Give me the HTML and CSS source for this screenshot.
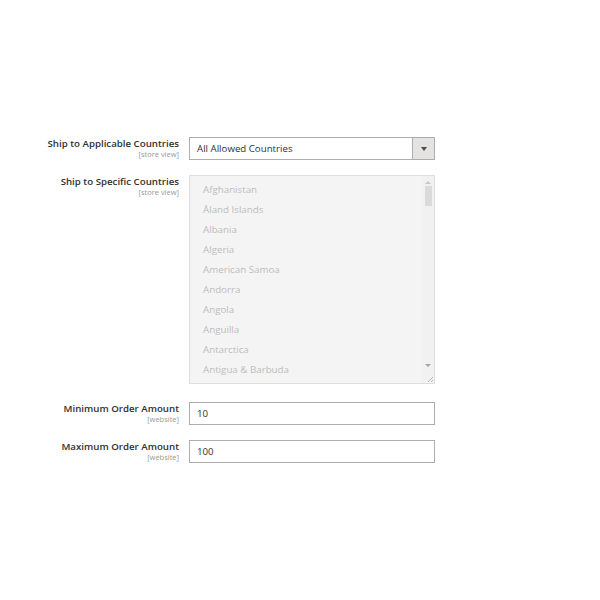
FILE: index.html
```html
<!DOCTYPE html>
<html>
<head>
<meta charset="utf-8">
<link rel="stylesheet" href="styles.css">
</head>
<body>
<div class="form">
  <div class="row row-select">
    <div class="label">
      <span class="title">Ship to Applicable Countries</span>
      <span class="scope">[store view]</span>
    </div>
    <div class="select">
      <span class="select-value">All Allowed Countries</span>
      <span class="select-arrow"><span class="tri"></span></span>
    </div>
  </div>
  <div class="row row-multi">
    <div class="label">
      <span class="title">Ship to Specific Countries</span>
      <span class="scope">[store view]</span>
    </div>
    <div class="multi">
      <ul class="options">
        <li>Afghanistan</li>
        <li>Åland Islands</li>
        <li>Albania</li>
        <li>Algeria</li>
        <li>American Samoa</li>
        <li>Andorra</li>
        <li>Angola</li>
        <li>Anguilla</li>
        <li>Antarctica</li>
        <li>Antigua &amp; Barbuda</li>
      </ul>
      <div class="scrollbar">
        <span class="sb-up"></span>
        <span class="sb-thumb"></span>
        <span class="sb-track"></span>
        <span class="sb-down"></span>
        <span class="sb-corner">
          <svg width="8" height="8" viewBox="0 0 8 8"><path d="M7 2 L2 7 M7 5 L5 7" stroke="#b8b8b8" stroke-width="1" fill="none"/></svg>
        </span>
      </div>
    </div>
  </div>
  <div class="row row-min">
    <div class="label">
      <span class="title">Minimum Order Amount</span>
      <span class="scope">[website]</span>
    </div>
    <div class="input">10</div>
  </div>
  <div class="row row-max">
    <div class="label">
      <span class="title">Maximum Order Amount</span>
      <span class="scope">[website]</span>
    </div>
    <div class="input">100</div>
  </div>
</div>
</body>
</html>
```

FILE: styles.css
```css
html, body {
  margin: 0;
  padding: 0;
  background: #ffffff;
}
body {
  font-family: "Open Sans", "DejaVu Sans", sans-serif;
  color: #303030;
}
.form {
  padding-top: 137px;
  display: flex;
  flex-direction: column;
}
.row {
  display: grid;
  grid-template-columns: 179px 246px;
  column-gap: 10px;
}
.row-multi { margin-top: 15px; }
.row-min { margin-top: 18px; }
.row-max { margin-top: 15px; }
.label {
  display: flex;
  flex-direction: column;
  align-items: flex-end;
  text-align: right;
}
.title {
  font-size: 9.7px;
  font-weight: 600;
  line-height: 13px;
  color: #303030;
}
.scope {
  font-size: 7.5px;
  line-height: 9px;
  color: #999999;
}
.select {
  box-sizing: border-box;
  height: 23px;
  border: 1px solid #adadad;
  display: flex;
  align-items: center;
  background: #fff;
}
.select-value {
  flex: 1;
  padding-left: 7px;
  padding-bottom: 1px;
  font-size: 9.7px;
  color: #303030;
}
.select-arrow {
  width: 21px;
  align-self: stretch;
  background: #e3e3e3;
  border-left: 1px solid #adadad;
  display: flex;
  align-items: center;
  justify-content: center;
}
.tri {
  width: 0;
  height: 0;
  border-left: 3px solid transparent;
  border-right: 3px solid transparent;
  border-top: 4px solid #514943;
}
.multi {
  box-sizing: border-box;
  height: 209px;
  border: 1px solid #dedede;
  background: #f4f4f4;
  display: flex;
}
.options {
  list-style: none;
  margin: 0;
  padding: 4px 0 0 13px;
  flex: 1;
}
.options li {
  font-size: 9.75px;
  line-height: 20px;
  color: #bdbdbd;
}
.scrollbar {
  width: 12px;
  display: flex;
  flex-direction: column;
  align-items: center;
  background: #f1f1f1;
}
.sb-up {
  margin-top: 5px;
  width: 0;
  height: 0;
  border-left: 3px solid transparent;
  border-right: 3px solid transparent;
  border-bottom: 3px solid #c8c8c8;
}
.sb-thumb {
  margin-top: 2px;
  width: 7px;
  height: 20px;
  background: #dadada;
}
.sb-track { flex: 1; }
.sb-down {
  width: 0;
  height: 0;
  border-left: 3px solid transparent;
  border-right: 3px solid transparent;
  border-top: 3px solid #a3a3a3;
  margin-bottom: 6px;
}
.sb-corner {
  width: 12px;
  height: 10px;
  display: flex;
  align-items: flex-end;
  justify-content: flex-end;
}
.input {
  box-sizing: border-box;
  height: 23px;
  border: 1px solid #adadad;
  background: #fff;
  padding-left: 7px;
  font-size: 9.7px;
  line-height: 22px;
  color: #303030;
}
```
